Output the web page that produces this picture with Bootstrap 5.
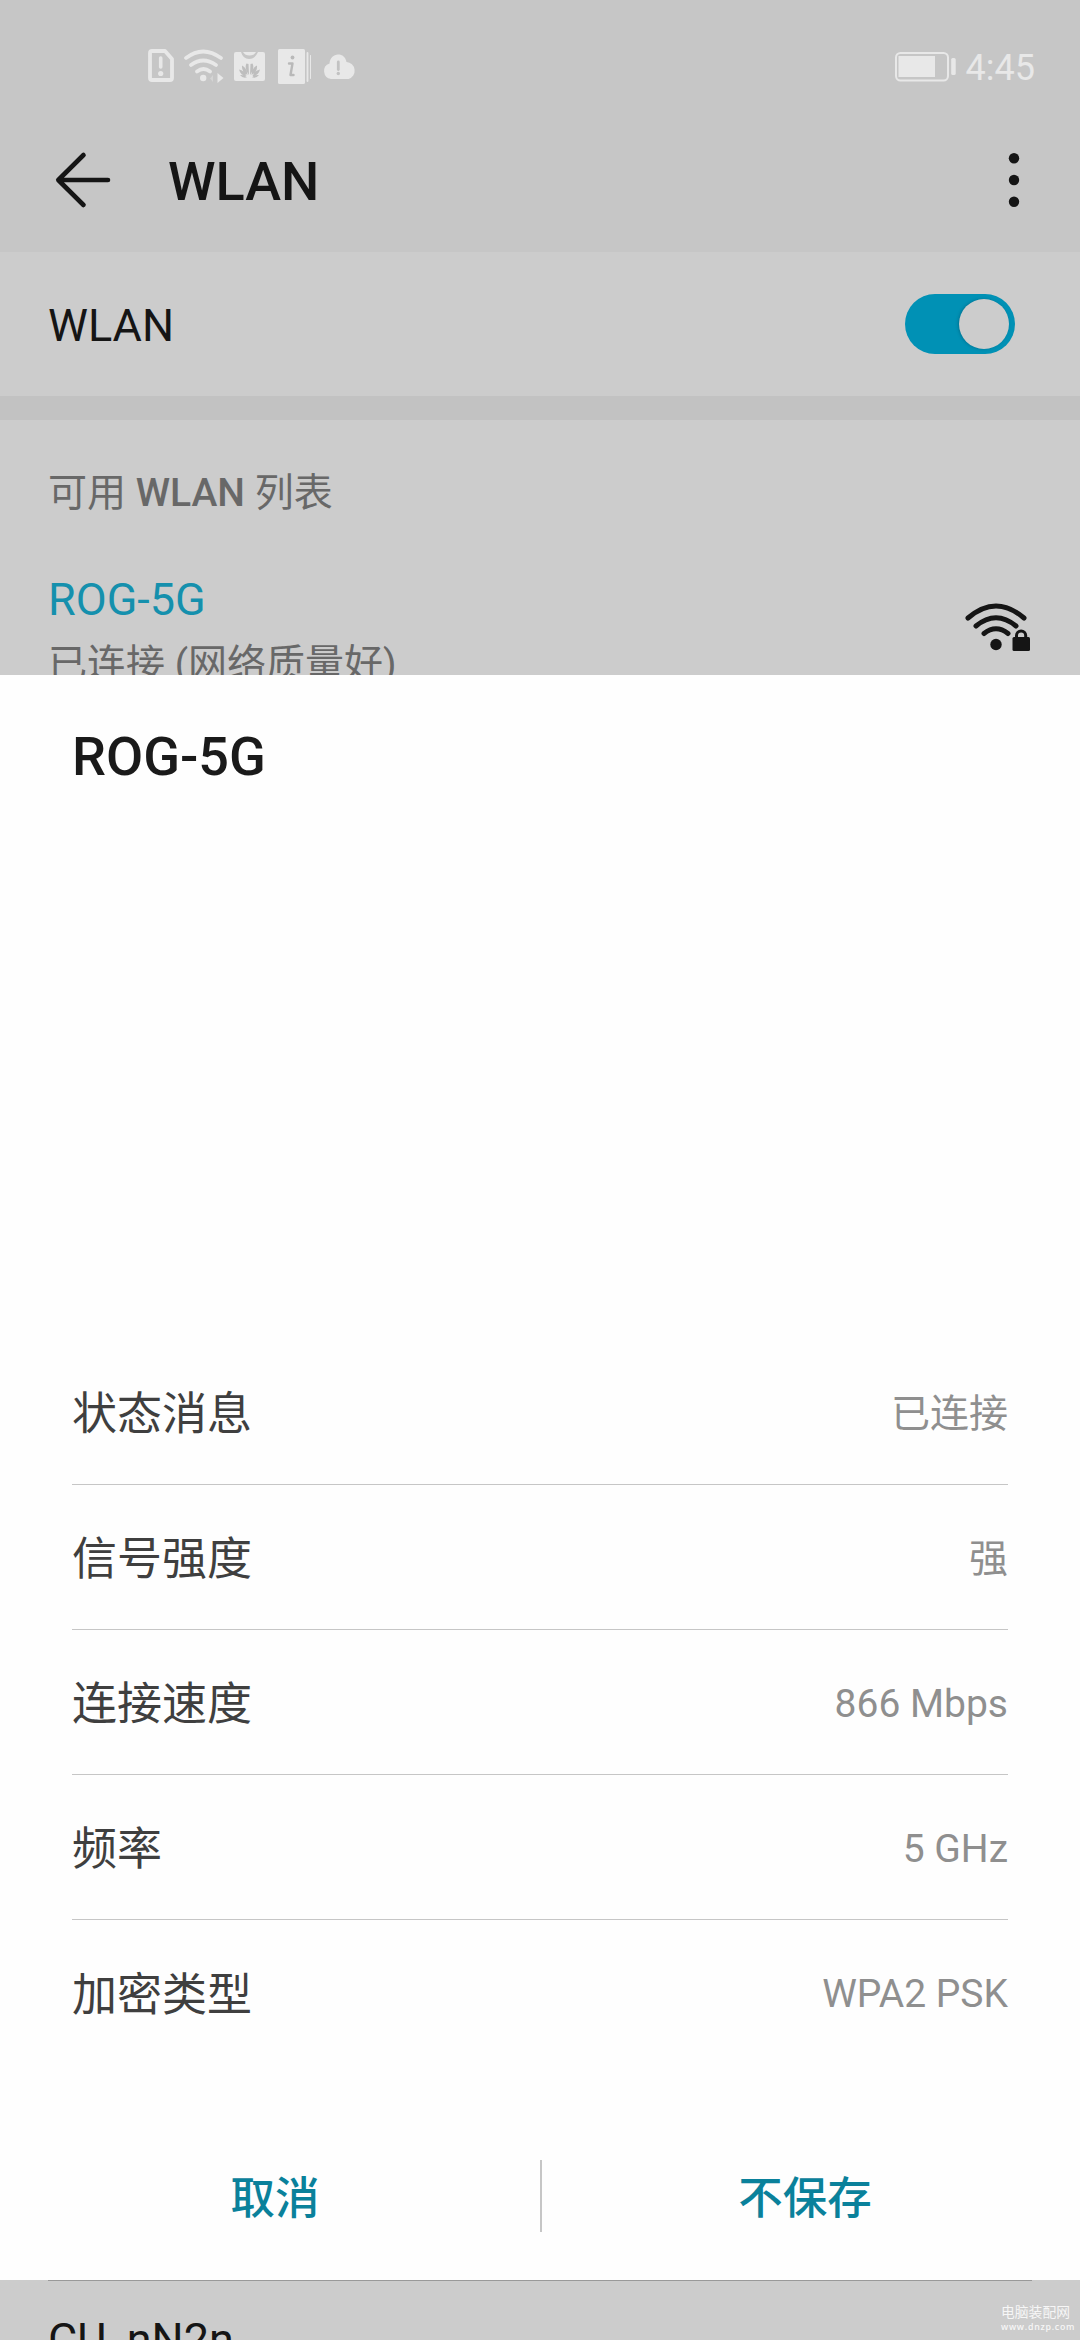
<!DOCTYPE html>
<html lang="zh-CN">
<head>
<meta charset="utf-8">
<meta name="viewport" content="width=device-width, initial-scale=1">
<title>WLAN</title>
<link href="https://cdn.jsdelivr.net/npm/bootstrap@5.3.0/dist/css/bootstrap.min.css" rel="stylesheet">
<style>
  body { background: #ccc; color: #151515; font-family: Roboto, "Noto Sans CJK SC", sans-serif; font-size: 45px; line-height: 60px; }
  .screen { width: 1080px; height: 2340px; background: #ccc; }
  .topbar { background: #c6c6c6; height: 252px; }
  .statusbar { height: 88px; padding: 0 45px 0 142px; color: #e8e8e8; font-size: 36px; line-height: 40px; }
  .appbar { height: 164px; padding: 20px 58px 0 54px; }
  .page-title { font-size: 54px; font-weight: 500; line-height: 64px; margin: 4px 0 0 56px; }
  .switch-row { height: 144px; padding: 0 65px 0 48px; }
  .switch-row > span { padding-top: 3px; }
  .toggle { width: 110px; height: 60px; padding: 5px 6px; background: #0091b5; }
  .knob { width: 50px; height: 50px; background: #ccc; box-shadow: -1px 0 3px rgba(0,60,80,.35); }
  .gap-band { height: 24px; background: #c2c2c2; }
  .section-label { height: 144px; padding: 2px 48px 0; color: #686868; font-size: 39px; white-space: pre; }
  .section-label b { font-weight: 500; }
  .network { height: 145px; padding: 6px 48px 0; }
  .network-name { color: #1590ad; }
  .network-state { color: #686868; font-size: 39px; line-height: 54px; margin-top: 7px; }
  .last-network { height: 60px; padding: 0 48px; }
  .last-network > div { border-top: 1px solid #999; padding-top: 29px; }
  .sheet { top: 675px; height: 1605px; background: #fefefe; }
  .sheet-title { font-size: 54px; font-weight: 500; line-height: 64px; padding: 50px 72px 0; color: #1a1a1a; }
  .facts { padding: 0 72px; margin-top: 551px; }
  .fact { height: 145px; padding-top: 3px; border-bottom: 1px solid #c6c6c6; color: #3f3f3f; }
  .fact:last-child { border-bottom: 0; }
  .fact > span:first-child { padding-top: 3px; }
  .fact-value { color: #8f8f8f; font-size: 39px; }
  .actions { height: 72px; margin-top: 95px; padding: 0 8px 0 10px; }
  .actions .btn { color: #0a819b; font-size: 44.5px; font-weight: 500; line-height: 60px; padding: 5px 0 0; border: 0; border-radius: 0; }
  .actions .btn:last-child { padding-right: 4px; }
  .actions .rule { width: 2px; background: #c6c6c6; }
  .watermark { right: 10px; bottom: 7px; width: 69px; color: #f6f6f6; font-size: 13.8px; line-height: 17px; }
  .watermark small { display: block; font: 8.8px/12px "Open Sans", sans-serif; font-weight: 600; letter-spacing: .75px; }
  svg { display: block; flex: none; }
</style>
</head>
<body>
<div class="screen position-relative overflow-hidden d-flex flex-column">
  <header class="topbar flex-shrink-0">
    <div class="statusbar d-flex align-items-end justify-content-between">
      <svg width="220" height="42" viewBox="142 46 220 42" fill="none" stroke="#e8e8e8" stroke-linecap="round" stroke-linejoin="round">
        <path d="M152 51h13l7 8v19q0 2-2 2h-18q-2 0-2-2V53q0-2 2-2Z" stroke-width="3.8"/>
        <path d="M160.7 58v9" stroke-width="3.6"/>
        <circle cx="160.7" cy="73.5" r="2.6" fill="#e8e8e8" stroke="none"/>
        <path d="M186 58q17-13 35 0M191 65q12-9 25 0M197 71.500q6.500-5 13 0" stroke-width="3.7"/>
        <circle cx="203.200" cy="78" r="3.200" fill="#e8e8e8" stroke="none"/>
        <path d="M213 75l-3 3.500 3 3.500Z" fill="#d4d4d4" stroke="none"/>
        <path d="M217.500 73l6 5-6 5Z" fill="#e8e8e8" stroke="none"/>
        <path d="M236 52h5q2 7 8 7t9-7h5q2 0 2 2v25q0 2-2 2h-27q-2 0-2-2V54q0-2 2-2Z" fill="#e8e8e8" stroke="none"/>
        <path d="M243 52q2 3.500 6.500 3.500T256 52Z" fill="#e8e8e8" stroke="none"/>
        <path fill="#bebebe" stroke="none" d="M249 75q-5-7-2.500-11.500l2 .5ZM250 75q5-7 2.500-11.500l-2 .5ZM247.500 75q-6-3-5.500-9.500 5 2.500 5.500 9.500ZM251.500 75q6-3 5.500-9.500-5 2.500-5.500 9.500ZM246.500 76q-6-.5-7.500-6.500 5.500 1 7.500 6.500ZM252.500 76q6-.5 7.500-6.500-5.500 1-7.500 6.500ZM247 77.300q-4 1.500-7-2.300 4-.5 7 2.300ZM252 77.300q4 1.500 7-2.300-4-.5-7 2.300Z"/>
        <path d="M279.500 49h24q1.500 0 1.500 1.500v32q0 1.500-1.500 1.500h-24q-1.500 0-1.500-1.500v-32q0-1.500 1.500-1.500Z" fill="#e8e8e8" stroke="none"/>
        <path d="M307.500 53v28" stroke-width="1.800"/><path d="M310.500 55.500v23" stroke-width="1"/>
        <circle cx="292.500" cy="57.500" r="1.900" fill="#b9b9b9" stroke="none"/>
        <path d="M289 63.500h3.500L290.500 75h3" stroke="#b9b9b9" stroke-width="2.400"/>
        <path d="M331 79a8 8 0 0 1-1.500-15.500C330 58 333.500 54.500 338 54.500c4.500 0 7.500 2.500 8.500 7.500a8.700 8.700 0 0 1 2 17Z" fill="#e8e8e8" stroke="none"/>
        <path d="M338.300 62v7.500" stroke="#c2c2c2" stroke-width="2.800"/>
        <circle cx="338.300" cy="73.500" r="1.700" fill="#c2c2c2" stroke="none"/>
      </svg>
      <div class="d-flex align-items-end">
        <svg width="72" height="42" viewBox="894 46 72 42" fill="#e8e8e8">
          <rect x="896" y="53" width="52" height="27.500" rx="4.500" fill="none" stroke="#e8e8e8" stroke-width="2"/>
          <rect x="898.500" y="56" width="36.500" height="21"/>
          <rect x="951.200" y="58" width="4.500" height="17" rx="1.500"/>
        </svg>
        <span>4:45</span>
      </div>
    </div>
    <div class="appbar d-flex align-items-center">
      <svg width="58" height="60" viewBox="54 150 58 60" fill="none" stroke="#151515" stroke-width="4.600" stroke-linecap="round" stroke-linejoin="round">
        <path d="M83.500 155 58.300 180 83.500 205M58.300 180H108"/>
      </svg>
      <h1 class="page-title">WLAN</h1>
      <svg class="ms-auto" width="16" height="60" viewBox="1006 150 16 60" fill="#151515">
        <circle cx="1014" cy="158.200" r="5.200"/><circle cx="1014" cy="180" r="5.200"/><circle cx="1014" cy="201.800" r="5.200"/>
      </svg>
    </div>
  </header>
  <section class="switch-row d-flex align-items-center justify-content-between flex-shrink-0">
    <span>WLAN</span>
    <div class="toggle rounded-pill d-flex justify-content-end" role="switch" aria-checked="true"><div class="knob rounded-circle"></div></div>
  </section>
  <div class="gap-band flex-shrink-0"></div>
  <div class="section-label d-flex align-items-center flex-shrink-0"><span>可用 <b>WLAN</b> 列表</span></div>
  <section class="network d-flex justify-content-between flex-shrink-0">
    <div>
      <div class="network-name">ROG-5G</div>
      <div class="network-state">已连接 (网络质量好)</div>
    </div>
    <svg class="align-self-start mt-4" width="70" height="68" viewBox="962 594 70 68" fill="none" stroke="#151515" stroke-width="5" stroke-linecap="round">
      <path d="M968 618Q996 594 1024 618M976 626Q996 609.500 1016 626M984 633.500Q996 624 1008 633.500"/>
      <circle cx="996" cy="644.500" r="5.700" fill="#151515" stroke="none"/>
      <path d="M1016.500 639v-3.500a4.600 4.600 0 0 1 9.200 0v3.500" stroke-width="3"/>
      <rect x="1012.500" y="637" width="17.500" height="14" rx="1.500" fill="#151515" stroke="none"/>
    </svg>
  </section>
  <section class="last-network mt-auto flex-shrink-0"><div>CU_nN2n</div></section>

  <div class="sheet position-absolute start-0 w-100" role="dialog">
    <div class="sheet-title">ROG-5G</div>
    <div class="facts">
      <div class="fact d-flex align-items-center justify-content-between"><span>状态消息</span><span class="fact-value">已连接</span></div>
      <div class="fact d-flex align-items-center justify-content-between"><span>信号强度</span><span class="fact-value">强</span></div>
      <div class="fact d-flex align-items-center justify-content-between"><span>连接速度</span><span class="fact-value">866 Mbps</span></div>
      <div class="fact d-flex align-items-center justify-content-between"><span>频率</span><span class="fact-value">5 GHz</span></div>
      <div class="fact d-flex align-items-center justify-content-between"><span>加密类型</span><span class="fact-value">WPA2 PSK</span></div>
    </div>
    <div class="actions d-flex">
      <button class="btn flex-fill w-50" type="button">取消</button>
      <div class="rule flex-shrink-0"></div>
      <button class="btn flex-fill w-50" type="button">不保存</button>
    </div>
  </div>
  <div class="watermark position-absolute text-nowrap">电脑装配网<small>www.dnzp.com</small></div>
</div>
<script src="https://cdn.jsdelivr.net/npm/bootstrap@5.3.0/dist/js/bootstrap.bundle.min.js"></script>
</body>
</html>
